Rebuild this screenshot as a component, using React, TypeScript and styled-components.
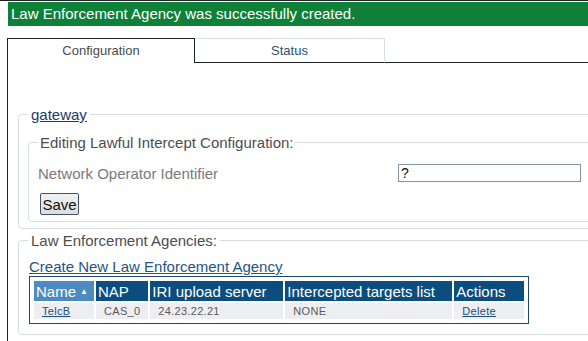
import React from "react";
import styled, { createGlobalStyle } from "styled-components";

const GlobalStyle = createGlobalStyle`
  html, body {
    margin: 0;
    padding: 0;
    overflow: hidden;
    background: #fff;
    font-family: "Liberation Sans", Arial, sans-serif;
  }
`;

const Page = styled.div`
  box-sizing: border-box;
  border-top: 1px solid #1e2224;
  padding-top: 1px;
  width: 588px;
  height: 341px;
  overflow: hidden;
`;

const Banner = styled.div`
  margin-left: 8px;
  height: 24px;
  line-height: 24px;
  padding-left: 3px;
  background: #0e8038;
  color: #fff;
  font-size: 15px;
`;

const Tabs = styled.div`
  display: flex;
  margin: 12px 0 0 7px;
  height: 25px;
`;

const Tab = styled.div<{ $active?: boolean }>`
  box-sizing: border-box;
  flex: none;
  width: ${(p) => (p.$active ? "188px" : "190px")};
  height: 25px;
  text-align: center;
  font-size: 13px;
  line-height: 24px;
  color: ${(p) => (p.$active ? "#4a4a4a" : "#2d4f6f")};
  border: 1px solid ${(p) => (p.$active ? "#1e2224" : "#dcdfe2")};
  border-bottom: ${(p) => (p.$active ? "none" : "1px solid #1e2224")};
  border-left: ${(p) => (p.$active ? "1px solid #1e2224" : "none")};
`;

const TabFiller = styled.div`
  flex: 1;
  border-bottom: 1px solid #1e2224;
`;

const Panel = styled.div`
  margin-left: 7px;
  margin-right: -10px;
  border-left: 1px solid #1e2224;
  padding-top: 43px;
  height: 260px;
`;

const Group = styled.fieldset<{ $gap?: number; $top?: number }>`
  margin: ${(p) => p.$gap ?? 0}px 0 0 10px;
  padding: ${(p) => p.$top ?? 11}px 0 6px 9px;
  border: 1px solid #d9dde0;
  border-radius: 4px;
`;

const Legend = styled.legend<{ $pad?: number }>`
  padding: 0 ${(p) => p.$pad ?? 2}px;
  font-size: 15px;
  color: #4d4d4d;
`;

const LegendLink = styled.a`
  color: #1c3b63;
  text-decoration: underline;
`;

const InnerGroup = styled.fieldset`
  margin: 0;
  padding: 12px 0 6px 9px;
  border: 1px solid #d9dde0;
  border-radius: 4px;
`;

const FieldRow = styled.div`
  display: flex;
  align-items: center;
  height: 20px;
`;

const Label = styled.span`
  width: 360px;
  font-size: 15px;
  color: #7a7a7a;
`;

const TextInput = styled.input`
  box-sizing: border-box;
  width: 183px;
  height: 18px;
  margin: 0;
  padding: 0 2px;
  border: 1px solid #8595a3;
  font-family: "Liberation Sans", Arial, sans-serif;
  font-size: 14px;
  color: #111;
`;

const SaveButton = styled.button`
  margin: 10px 0 0 2px;
  width: 39px;
  height: 22px;
  padding: 0;
  border: 1px solid #3d566d;
  border-radius: 2px;
  background: linear-gradient(#f2f2f2, #dcdcdc);
  font-family: "Liberation Sans", Arial, sans-serif;
  font-size: 15px;
  color: #111;
`;

const CreateLink = styled.a`
  display: block;
  margin-left: 1px;
  font-size: 15px;
  line-height: 17px;
  color: #1f5486;
  text-decoration: underline;
`;

const TableFrame = styled.div`
  display: inline-block;
  margin: 1px 0 0 1px;
  padding: 2px;
  border: 1px solid #1d4a6b;
`;

const Grid = styled.table`
  border-spacing: 2px;
  font-family: "Liberation Sans", Arial, sans-serif;
`;

const Head = styled.th<{ $sorted?: boolean; $w: number }>`
  width: ${(p) => p.$w}px;
  height: 20px;
  padding: 0 2px;
  text-align: left;
  font-weight: normal;
  font-size: 15px;
  color: #fff;
  background: ${(p) => (p.$sorted ? "#4b8bbf" : "#0b4d7e")};
  white-space: nowrap;
`;

const Arrow = styled.span`
  font-size: 8px;
  vertical-align: 3px;
  margin-left: 4px;
`;

const Cell = styled.td<{ $align?: string }>`
  height: 16px;
  padding: 0 8px;
  text-align: ${(p) => p.$align ?? "left"};
  font-size: 11px;
  letter-spacing: 0.3px;
  color: #5a5a5a;
  background: #eceef2;
`;

const CellLink = styled.a`
  color: #1f4d7c;
  text-decoration: underline;
`;

export default function App() {
  return (
    <Page>
      <GlobalStyle />
      <Banner>Law Enforcement Agency was successfully created.</Banner>
      <Tabs>
        <Tab $active>Configuration</Tab>
        <Tab>Status</Tab>
        <TabFiller />
      </Tabs>
      <Panel>
        <Group>
          <Legend $pad={3}>
            <LegendLink>gateway</LegendLink>
          </Legend>
          <InnerGroup>
            <Legend>Editing Lawful Intercept Configuration:</Legend>
            <FieldRow>
              <Label>Network Operator Identifier</Label>
              <TextInput defaultValue="?" />
            </FieldRow>
            <SaveButton>Save</SaveButton>
          </InnerGroup>
        </Group>
        <Group $gap={3} $top={9}>
          <Legend $pad={3}>Law Enforcement Agencies:</Legend>
          <CreateLink>Create New Law Enforcement Agency</CreateLink>
          <TableFrame>
            <Grid>
              <thead>
                <tr>
                  <Head $sorted $w={56}>
                    Name<Arrow>▲</Arrow>
                  </Head>
                  <Head $w={45}>NAP</Head>
                  <Head $w={129}>IRI upload server</Head>
                  <Head $w={163}>Intercepted targets list</Head>
                  <Head $w={66}>Actions</Head>
                </tr>
              </thead>
              <tbody>
                <tr>
                  <Cell>
                    <CellLink>TelcB</CellLink>
                  </Cell>
                  <Cell $align="right">CAS_0</Cell>
                  <Cell>24.23.22.21</Cell>
                  <Cell>NONE</Cell>
                  <Cell>
                    <CellLink>Delete</CellLink>
                  </Cell>
                </tr>
              </tbody>
            </Grid>
          </TableFrame>
        </Group>
      </Panel>
    </Page>
  );
}
